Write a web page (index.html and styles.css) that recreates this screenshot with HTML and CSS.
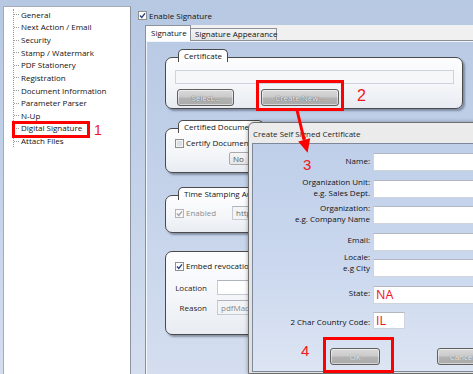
FILE: index.html
```html
<!DOCTYPE html>
<html lang="en">
<head>
<meta charset="utf-8">
<title>Digital Signature</title>
<link rel="stylesheet" href="styles.css">
</head>
<body>
<div class="app">
  <nav class="tree">
    <ul>
      <li>General</li>
      <li>Next Action / Email</li>
      <li>Security</li>
      <li>Stamp / Watermark</li>
      <li>PDF Stationery</li>
      <li>Registration</li>
      <li>Document Information</li>
      <li>Parameter Parser</li>
      <li>N-Up</li>
      <li>Digital Signature</li>
      <li>Attach Files</li>
    </ul>
  </nav>
  <main class="main">
    <div class="check-row top-check">
      <svg class="cb" viewBox="0 0 9 9"><rect x=".5" y=".5" width="8" height="8" fill="#fcfcfc" stroke="#8f8f8f"/><path d="M2 4.5l1.8 2L7 2.3" fill="none" stroke="#263f7a" stroke-width="1.3"/></svg>
      <span>Enable Signature</span>
    </div>
    <div class="tabctl">
      <div class="tabstrip">
        <div class="tab active">Signature</div>
        <div class="tab second">Signature Appearance</div>
      </div>
      <div class="tabpage">
        <section class="group g-cert">
          <div class="legend">Certificate</div>
          <div class="field cert-field"></div>
          <div class="btn-row">
            <div class="btn btn-select">Select...</div>
            <div class="btn btn-create">Create New...</div>
          </div>
        </section>
        <section class="group g-certified">
          <div class="legend">Certified Document</div>
          <div class="check-row in-group">
            <svg class="cb" viewBox="0 0 9 9"><rect x=".5" y=".5" width="8" height="8" fill="#f4f4f4" stroke="#8f8f8f"/><rect x="2" y="2" width="5" height="5" fill="#dcdfe3"/></svg>
            <span>Certify Document</span>
          </div>
          <div class="combo">No</div>
        </section>
        <section class="group g-time">
          <div class="legend">Time Stamping Authority</div>
          <div class="time-row">
            <div class="check-row disabled">
              <svg class="cb" viewBox="0 0 9 9"><rect x=".5" y=".5" width="8" height="8" fill="#f7f7f7" stroke="#b4b4b4"/><path d="M2 4.5l1.8 2L7 2.3" fill="none" stroke="#a2a2a2" stroke-width="1.3"/></svg>
              <span>Enabled</span>
            </div>
            <div class="field ts-field">http://timestamp</div>
          </div>
        </section>
        <section class="group g-embed">
          <div class="check-row in-group">
            <svg class="cb" viewBox="0 0 9 9"><rect x=".5" y=".5" width="8" height="8" fill="#fcfcfc" stroke="#8f8f8f"/><path d="M2 4.5l1.8 2L7 2.3" fill="none" stroke="#263f7a" stroke-width="1.3"/></svg>
            <span>Embed revocation information</span>
          </div>
          <div class="form-grid">
            <span class="flabel">Location</span><div class="field"></div>
            <span class="flabel">Reason</span><div class="field ro">pdfMachine</div>
          </div>
        </section>
      </div>
    </div>
  </main>
</div>

<div class="dialog">
  <div class="titlebar">Create Self Signed Certificate</div>
  <div class="client">
    <div class="cert-form">
      <span class="dlabel">Name:</span><div class="input"></div>
      <span class="dlabel">Organization Unit:<br>e.g. Sales Dept.</span><div class="input"></div>
      <span class="dlabel">Organization:<br>e.g. Company Name</span><div class="input"></div>
      <span class="dlabel">Email:</span><div class="input"></div>
      <span class="dlabel locale">Locale:<br>e.g City</span><div class="input"></div>
      <span class="dlabel">State:</span><div class="input red">NA</div>
      <span class="dlabel country">2 Char Country Code:</span><div class="input red short">IL</div>
    </div>
    <div class="dlg-buttons">
      <div class="btn dbtn">OK</div>
      <div class="btn dbtn">Cancel</div>
    </div>
  </div>
</div>

<div class="mark m1"></div>
<div class="mark m2"></div>
<div class="mark m4"></div>
<span class="num n1">1</span>
<span class="num n2">2</span>
<span class="num n3">3</span>
<span class="num n4">4</span>
<svg class="arrow" width="473" height="374" viewBox="0 0 473 374">
  <line x1="297" y1="110" x2="304.2" y2="140" stroke="#ff0000" stroke-width="3"/>
  <polygon points="310.2,138.2 307.6,152.8 298.2,141.6" fill="#ff0000"/>
</svg>
</body>
</html>
```

FILE: styles.css
```css
* { box-sizing: border-box; }
html, body { margin: 0; padding: 0; }
body {
  width: 473px;
  height: 374px;
  overflow: hidden;
  position: relative;
  background: linear-gradient(180deg, #b7c8e3 0%, #c2d1e9 45%, #d4deef 100%);
  font-family: "Open Sans", "Noto Sans", sans-serif;
  font-size: 8px;
  line-height: 10px;
  color: #111;
}

.app { display: flex; height: 100%; padding: 6px 0 0 3px; overflow: hidden; }

/* tree */
.tree {
  flex: none;
  width: 128px;
  background: #fff;
  border: 1px solid #a4abb5;
  border-right-color: #8d939c;
  border-bottom: none;
  padding-top: 1.5px;
}
.tree ul { list-style: none; margin: 0 0 0 9px; padding: 0; border-left: 1px dotted #9b9b9b; }
.tree li { display: flex; align-items: center; height: 12.63px; white-space: nowrap; }
.tree li::before { content: ""; flex: none; width: 5px; border-top: 1px dotted #9b9b9b; margin-right: 2px; }

/* main */
.main { flex: 1; min-width: 0; display: flex; flex-direction: column; }
.check-row { display: flex; align-items: center; gap: 2px; white-space: nowrap; }
.top-check { margin: 4px 0 0 7px; height: 11px; }
.cb { width: 9px; height: 9px; flex: none; display: block; }

.tabctl { margin: 4px 0 0 14px; flex: 1; display: flex; flex-direction: column; }
.tabstrip { height: 15px; background: #f0f0f0; display: flex; align-items: flex-end; flex: none; }
.tab {
  height: 12px;
  border: 1px solid #8e9199;
  border-bottom: none;
  background: linear-gradient(#f4f4f4, #e4e4e4);
  padding-left: 4px;
  line-height: 9px;
  white-space: nowrap;
}
.tab.active {
  width: 46px;
  height: 16px;
  margin-bottom: -1px;
  background: #fff;
  padding-left: 5px;
  line-height: 13px;
  position: relative;
  z-index: 1;
}
.tab.second { width: 86px; border-left: none; }

.tabpage {
  flex: 1;
  border-top: 1px solid #8b8f98;
  border-left: 1px solid #8b8f98;
  box-shadow: inset 1px 1px 0 rgba(255,255,255,.8);
  padding: 16px 0 0 19px;
}

.group {
  width: 298px;
  border: 1px solid #4a4a4a;
  border-radius: 7px;
  background: linear-gradient(180deg, #fdfdfe 0%, #f4f6f9 55%, #e8ecf2 100%);
  box-shadow: 2px 2px 2px rgba(50, 60, 80, .45);
  padding: 0 8px 0 9px;
}
.legend {
  width: fit-content;
  height: 13px;
  margin: -9px 0 0 3px;
  border: 1px solid #4a4a4a;
  border-bottom: none;
  border-radius: 5px 5px 0 0;
  background: #fff;
  padding: 0 5px;
  line-height: 12px;
  white-space: nowrap;
}

.field {
  height: 15px;
  background: #fff;
  border: 1px solid #c6cbd3;
  border-top-color: #aeb4bd;
  padding-left: 3px;
  line-height: 13px;
  white-space: nowrap;
  overflow: hidden;
}

.g-cert { height: 52px; }
.cert-field { margin-top: 8px; height: 14px; background: #f6f7f9; border-color: #cfd4dc; }
.btn-row { display: flex; gap: 27px; margin-top: 5px; padding-left: 2px; }
.btn {
  height: 17px;
  border: 1px solid #5f5f5f;
  border-radius: 3px;
  background: linear-gradient(180deg, #d9d9d9 0%, #cbcbcb 45%, #b3b3b3 55%, #aaaaaa 100%);
  box-shadow: inset 0 0 0 1px rgba(255,255,255,.5);
  color: #fbfbfb;
  text-align: center;
  line-height: 15px;
  text-shadow: 0 0 1px #5a5a5a, 0 0 1px #5a5a5a;
  white-space: nowrap;
  overflow: hidden;
}
.btn-select { width: 57px; }
.btn-create { width: 78px; }

.g-certified { height: 45px; margin-top: 19px; }
.in-group { height: 10px; margin-top: 5px; }
.combo {
  width: 60px;
  height: 13px;
  margin: 4px 0 0 54px;
  background: linear-gradient(#f6f6f6, #e6e6e6);
  border: 1px solid #a9a9a9;
  border-radius: 2px;
  padding-left: 3px;
  line-height: 11px;
  color: #555;
}

.g-time { height: 38px; margin-top: 22px; }
.time-row { display: flex; align-items: center; height: 14px; margin-top: 6px; }
.time-row .check-row { width: 57px; color: #8d8d8d; }
.ts-field { width: 80px; height: 14px; line-height: 12px; background: #f3f4f6; color: #6d6d6d; }

.g-embed { height: 84px; margin-top: 18px; }
.g-embed .in-group { margin-top: 9px; }
.form-grid {
  display: grid;
  grid-template-columns: 42px 100px;
  grid-auto-rows: 15px;
  row-gap: 5px;
  margin-top: 9px;
}
.flabel { padding-right: 10px; text-align: right; align-self: center; color: #2e2323; }
.field.ro { background: #f3f4f6; color: #8a8a8a; }

/* dialog */
.dialog {
  position: absolute;
  left: 248px;
  top: 122px;
  width: 240px;
  height: 252px;
  border: 1px solid #6f6f6f;
  border-radius: 6px 6px 0 0;
  background: linear-gradient(180deg, #ececec, #dfdfdf);
  box-shadow: 0 0 4px rgba(0,0,0,.35);
  padding: 0 0 1px 3px;
  display: flex;
  flex-direction: column;
}
.titlebar { height: 20px; line-height: 22px; padding-left: 1px; color: #1e1e1e; white-space: nowrap; flex: none; }
.client {
  flex: 1;
  border: 1px solid #7d889a;
  border-right: none;
  background: linear-gradient(180deg, #bfcfe9 0%, #cbd8ee 55%, #dde5f3 100%);
  padding-top: 9px;
}
.cert-form {
  display: grid;
  grid-template-columns: 117px 110px;
  column-gap: 3px;
  grid-auto-rows: 18px;
  row-gap: 8.5px;
}
.dlabel { text-align: right; align-self: center; line-height: 11px; margin-bottom: 4px; white-space: nowrap; }
.dlabel.locale { margin-bottom: 12px; }
.dlabel.country { margin-bottom: 0; }
.input {
  background: #fff;
  border: 1px solid #cfd3da;
  border-top-color: #b3b8c0;
}
.input.red {
  color: #f0141e;
  font-size: 12.5px;
  line-height: 16px;
  padding-left: 2px;
}
.input.short { width: 32px; height: 17px; }
.dlg-buttons { display: flex; gap: 57px; margin-top: 18px; padding-left: 77px; }
.dbtn { width: 57px; color: #ececec; text-shadow: 0 0 1px #777; }

/* annotations */
.mark { position: absolute; border: 3px solid #ff0000; }
.m1 { left: 12px; top: 121px; width: 78px; height: 17px; }
.m2 { left: 256px; top: 80px; width: 88px; height: 31px; }
.m4 { left: 323px; top: 337px; width: 71px; height: 36px; }
.num { position: absolute; font-family: "Liberation Sans", Arial, sans-serif; color: #f01818; line-height: 1; }
.n1 { left: 94px; top: 123px; font-size: 14px; }
.n2 { left: 357px; top: 88px; font-size: 16px; }
.n3 { left: 303px; top: 157px; font-size: 15px; }
.n4 { left: 301px; top: 343px; font-size: 15px; }
.arrow { position: absolute; left: 0; top: 0; pointer-events: none; }
```
